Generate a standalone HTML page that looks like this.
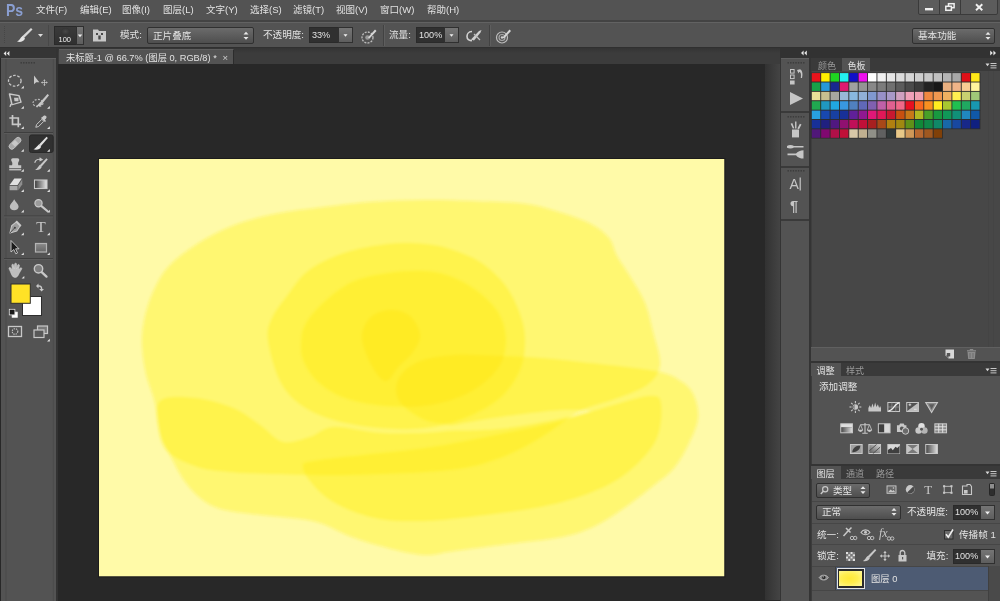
<!DOCTYPE html>
<html lang="zh-CN">
<head>
<meta charset="utf-8">
<title>Photoshop</title>
<style>
*{box-sizing:border-box;margin:0;padding:0}
html,body{width:1000px;height:601px;overflow:hidden;background:#282828}
body{position:relative;font-family:"Liberation Sans","Noto Sans CJK SC",sans-serif;font-size:9.5px;color:#e2e2e2}
.abs{position:absolute}
.t{position:absolute;white-space:nowrap;line-height:12px;height:12px}
#menubar{left:0;top:0;width:1000px;height:22px;background:#535353;border-bottom:2px solid #434343}
#optbar{left:0;top:22px;width:1000px;height:26px;background:#535353;border-top:1px solid #626262;border-bottom:1px solid #303030}
#tabstrip{left:57px;top:48px;width:724px;height:16px;background:linear-gradient(#343434,#3c3c3c 5px)}
#doctab{left:58.5px;top:48.5px;width:175.5px;height:15.5px;background:#535353;border-top:1px solid #5e5e5e;border-right:1.5px solid #2c2c2c}
#toolhead{left:0;top:48px;width:57px;height:10px;background:#353535}
#tools{left:1px;top:58px;width:55px;height:543px;background:#535353;border-top:1px solid #606060}
#toolgap{left:56px;top:48px;width:2px;height:553px;background:#333}
#rscroll{left:765px;top:64px;width:15px;height:536px;background:linear-gradient(to right,#323232,#444)}
#rightbg{left:780px;top:48px;width:220px;height:553px;background:#343434}
.panel{position:absolute;background:#535353}
.ddl{position:absolute;background:linear-gradient(#6b6b6b,#4e4e4e);border:1px solid #303030;border-radius:2px}
.inp{position:absolute;background:#303030;border:1px solid #2a2a2a}
.btn{position:absolute;background:linear-gradient(#757575,#5e5e5e);border:1px solid #303030}
.sep{position:absolute;background:#3f3f3f}
.tabi{position:absolute;color:#9a9a9a}
</style>
</head>
<body>
<div id="root" style="position:absolute;left:0;top:0;width:1000px;height:601px;will-change:transform">
<!-- menu bar -->
<div class="abs" id="menubar"></div>
<div class="t" style="left:6px;top:0;font-size:16.5px;line-height:20px;height:20px;font-weight:bold;color:#8a9fd2;letter-spacing:0;transform:scaleX(0.85);transform-origin:0 0">Ps</div>
<div class="t" style="left:36px;top:4px">文件(F)</div>
<div class="t" style="left:80px;top:4px">编辑(E)</div>
<div class="t" style="left:122px;top:4px">图像(I)</div>
<div class="t" style="left:163px;top:4px">图层(L)</div>
<div class="t" style="left:206px;top:4px">文字(Y)</div>
<div class="t" style="left:250px;top:4px">选择(S)</div>
<div class="t" style="left:293px;top:4px">滤镜(T)</div>
<div class="t" style="left:336px;top:4px">视图(V)</div>
<div class="t" style="left:380px;top:4px">窗口(W)</div>
<div class="t" style="left:427px;top:4px">帮助(H)</div>
<!-- window controls -->
<div class="abs" style="left:918px;top:-1px;width:80px;height:16px;background:#5c5c5c;border:1px solid #3a3a3a;border-radius:0 0 2px 2px"></div>
<div class="abs" style="left:939px;top:0;width:1px;height:14px;background:#3a3a3a"></div>
<div class="abs" style="left:960px;top:0;width:1px;height:14px;background:#3a3a3a"></div>
<svg class="abs" style="left:918px;top:0" width="80" height="15" viewBox="0 0 80 15">
<rect x="7" y="8" width="8" height="2.4" fill="#f0f0f0"/>
<rect x="30.5" y="3.7" width="5.6" height="4" fill="none" stroke="#f0f0f0" stroke-width="1.5"/>
<rect x="27.8" y="6.3" width="5.6" height="4" fill="#5c5c5c" stroke="#f0f0f0" stroke-width="1.5"/>
<path d="M58,4.3 L64.3,10.2 M64.3,4.3 L58,10.2" stroke="#f0f0f0" stroke-width="1.9" fill="none"/>
</svg>
<!-- options bar -->
<div class="abs" id="optbar"></div>
<svg class="abs" style="left:0;top:23px" width="60" height="24" viewBox="0 0 60 24">
<g fill="#464646"><rect x="4" y="3" width="1" height="1"/><rect x="4" y="5" width="1" height="1"/><rect x="4" y="7" width="1" height="1"/><rect x="4" y="9" width="1" height="1"/><rect x="4" y="11" width="1" height="1"/><rect x="4" y="13" width="1" height="1"/><rect x="4" y="15" width="1" height="1"/><rect x="4" y="17" width="1" height="1"/><rect x="4" y="19" width="1" height="1"/></g>
<path d="M31,5 L32.5,6.5 L24,15 L22,13.5 Z" fill="#d8d8d8"/>
<path d="M22.5,13 L25,15.5 C24,18.5 20,19.5 17,18.5 C19.5,17.5 20,15 22.5,13Z" fill="#e4e4e4"/>
<path d="M38,11 L43,11 L40.5,14 Z" fill="#dcdcdc"/>
</svg>
<div class="abs" style="left:47.5px;top:25px;width:1px;height:21px;background:#484848"></div>
<div class="inp" style="left:53.5px;top:26px;width:23px;height:18.5px;background:linear-gradient(#3a3a3a,#303030)"></div>
<div class="abs" style="left:61px;top:28px;width:9px;height:7px;border-radius:50%;background:radial-gradient(#484848,#343434 70%)"></div>
<div class="t" style="left:58.5px;top:34px;font-size:7.5px;color:#f0f0f0">100</div>
<div class="btn" style="left:76px;top:26px;width:7.5px;height:18.5px"></div>
<svg class="abs" style="left:76px;top:26px" width="8" height="19"><path d="M1.8,8.5 L6.2,8.5 L4,11.2Z" fill="#f0f0f0"/></svg>
<svg class="abs" style="left:92px;top:28px" width="15" height="15" viewBox="0 0 15 15">
<path d="M1,3 L1,1.5 L6,1.5 L7,3 L14,3 L14,13.5 L1,13.5Z" fill="#c8c8c8"/>
<rect x="4" y="5" width="2" height="2" fill="#484848"/><rect x="9" y="5" width="2" height="2" fill="#484848"/><rect x="6.3" y="7.5" width="2.4" height="4" fill="#484848"/>
</svg>
<div class="t" style="left:120px;top:29px;font-size:9.6px">模式:</div>
<div class="ddl" style="left:147px;top:27px;width:107px;height:16.5px"></div>
<div class="t" style="left:153px;top:29.5px;font-size:9.6px">正片叠底</div>
<svg class="abs" style="left:242px;top:30px" width="8" height="12"><path d="M1.5,4.5 L4,1.8 L6.5,4.5Z M1.5,7 L4,9.8 L6.5,7Z" fill="#e8e8e8"/></svg>
<div class="t" style="left:263px;top:29px;font-size:9.6px">不透明度:</div>
<div class="inp" style="left:309px;top:27px;width:30px;height:16px"></div>
<div class="t" style="left:312px;top:29px;font-size:9.1px">33%</div>
<div class="btn" style="left:338px;top:27px;width:15px;height:16px"></div>
<svg class="abs" style="left:338px;top:27px" width="15" height="17"><path d="M5.5,7.3 L9.5,7.3 L7.5,9.8Z" fill="#f0f0f0"/></svg>
<svg class="abs" style="left:360px;top:27px" width="18" height="18" viewBox="0 0 18 18">
<circle cx="7.5" cy="10.5" r="5.5" fill="none" stroke="#bdbdbd" stroke-width="1.3" stroke-dasharray="2 1.2"/>
<circle cx="7.500" cy="10.5" r="2.3" fill="#9a9a9a"/>
<path d="M8,10.5 L15,2.5 L16.5,4 L9.5,11.5Z" fill="#d6d6d6"/>
</svg>
<div class="abs" style="left:383px;top:25px;width:1px;height:21px;background:#424242"></div>
<div class="abs" style="left:384px;top:25px;width:1px;height:21px;background:#5e5e5e"></div>
<div class="t" style="left:389px;top:29px;font-size:9.6px">流量:</div>
<div class="inp" style="left:416px;top:27px;width:29px;height:16px"></div>
<div class="t" style="left:419px;top:29px;font-size:9.1px">100%</div>
<div class="btn" style="left:444px;top:27px;width:15px;height:16px"></div>
<svg class="abs" style="left:444px;top:27px" width="15" height="17"><path d="M5.5,7.3 L9.5,7.3 L7.5,9.8Z" fill="#f0f0f0"/></svg>
<svg class="abs" style="left:465px;top:27px" width="20" height="18" viewBox="0 0 20 18">
<path d="M7,4.5 C3,4.5 2,8 2,9.5 C2,12 4,14 7,13.5" fill="none" stroke="#d0d0d0" stroke-width="1.6"/>
<path d="M6,12.5 L14,4 L16.5,3 L15.5,5.5 L9,13.5 Z" fill="#d0d0d0"/>
<path d="M9,7 C11,9 13,11 15,13" stroke="#c0c0c0" stroke-width="1.3" fill="none"/>
</svg>
<div class="abs" style="left:489px;top:25px;width:1px;height:21px;background:#424242"></div>
<div class="abs" style="left:490px;top:25px;width:1px;height:21px;background:#5e5e5e"></div>
<svg class="abs" style="left:495px;top:27px" width="18" height="18" viewBox="0 0 18 18">
<circle cx="7" cy="10.5" r="5.5" fill="none" stroke="#bdbdbd" stroke-width="1.2"/>
<circle cx="7" cy="10.5" r="3" fill="none" stroke="#a8a8a8" stroke-width="1.1"/>
<circle cx="7" cy="10.5" r="1.2" fill="#d0d0d0"/>
<path d="M7.5,10.5 L14.5,2.5 L16,4 L9,11.5Z" fill="#d6d6d6"/>
</svg>
<div class="ddl" style="left:912px;top:28px;width:83px;height:16px"></div>
<div class="t" style="left:918px;top:30px;font-size:9.6px">基本功能</div>
<svg class="abs" style="left:984px;top:30px" width="8" height="12"><path d="M1.5,4.8 L4,2 L6.5,4.8Z M1.5,7 L4,9.8 L6.5,7Z" fill="#e8e8e8"/></svg>

<!-- tab strip -->
<div class="abs" id="tabstrip"></div>
<div class="abs" id="doctab"></div>
<div class="t" style="left:66px;top:51.8px;font-size:9.25px">未标题-1 @ 66.7% (图层 0, RGB/8) *</div>
<div class="t" style="left:222.6px;top:51.8px;font-size:9.5px;color:#cfcfcf">×</div>
<div class="abs" id="rscroll"></div>
<!-- left toolbar -->
<div class="abs" id="toolhead"></div>
<div class="abs" id="toolgap"></div>
<div class="abs" id="tools"></div>
<svg class="abs" style="left:0;top:48px" width="58" height="553" viewBox="0 48 58 553">
<path d="M6.2,51 L6.2,56 L3.6,53.5Z M9.4,51 L9.4,56 L6.8,53.5Z" fill="#e6e6e6"/>
<g fill="#3c3c3c"><rect x="20.5" y="62" width="1.4" height="1.6"/><rect x="23.1" y="62" width="1.4" height="1.6"/><rect x="25.7" y="62" width="1.4" height="1.6"/><rect x="28.3" y="62" width="1.4" height="1.6"/><rect x="30.9" y="62" width="1.4" height="1.6"/><rect x="33.5" y="62" width="1.4" height="1.6"/></g>
<rect x="5.5" y="59" width="1" height="542" fill="#4b4b4b"/><rect x="52.8" y="59" width="1" height="542" fill="#4b4b4b"/>
<rect x="4" y="132" width="49" height="1" fill="#3e3e3e"/><rect x="4" y="133" width="49" height="1" fill="#5a5a5a"/>
<rect x="4" y="215.5" width="49" height="1" fill="#3e3e3e"/><rect x="4" y="216.5" width="49" height="1" fill="#5a5a5a"/>
<rect x="4" y="258" width="49" height="1" fill="#3e3e3e"/><rect x="4" y="259" width="49" height="1" fill="#5a5a5a"/>
<rect x="29.5" y="135" width="23.7" height="17.500" rx="2" fill="#303030" stroke="#292929"/>
<path d="M23.8,88.4 L23.8,85.7 L21.1,88.4Z" fill="#e4e4e4"/>
<path d="M23.8,108.7 L23.8,106.0 L21.1,108.7Z" fill="#e4e4e4"/>
<path d="M49.8,108.7 L49.8,106.0 L47.099999999999994,108.7Z" fill="#e4e4e4"/>
<path d="M23.8,129 L23.8,126.3 L21.1,129Z" fill="#e4e4e4"/>
<path d="M49.8,129 L49.8,126.3 L47.099999999999994,129Z" fill="#e4e4e4"/>
<path d="M23.8,151.8 L23.8,149.10000000000002 L21.1,151.8Z" fill="#e4e4e4"/>
<path d="M49.8,151.8 L49.8,149.10000000000002 L47.099999999999994,151.8Z" fill="#e4e4e4"/>
<path d="M23.8,171.8 L23.8,169.10000000000002 L21.1,171.8Z" fill="#e4e4e4"/>
<path d="M49.8,171.8 L49.8,169.10000000000002 L47.099999999999994,171.8Z" fill="#e4e4e4"/>
<path d="M23.8,192 L23.8,189.3 L21.1,192Z" fill="#e4e4e4"/>
<path d="M49.8,192 L49.8,189.3 L47.099999999999994,192Z" fill="#e4e4e4"/>
<path d="M23.8,212.4 L23.8,209.70000000000002 L21.1,212.4Z" fill="#e4e4e4"/>
<path d="M49.8,212.4 L49.8,209.70000000000002 L47.099999999999994,212.4Z" fill="#e4e4e4"/>
<path d="M23.8,235.2 L23.8,232.5 L21.1,235.2Z" fill="#e4e4e4"/>
<path d="M49.8,235.2 L49.8,232.5 L47.099999999999994,235.2Z" fill="#e4e4e4"/>
<path d="M23.8,255.1 L23.8,252.4 L21.1,255.1Z" fill="#e4e4e4"/>
<path d="M49.8,255.1 L49.8,252.4 L47.099999999999994,255.1Z" fill="#e4e4e4"/>
<path d="M24.3,278.6 L24.3,275.90000000000003 L21.6,278.6Z" fill="#e4e4e4"/>
<ellipse cx="14.8" cy="80.8" rx="6.3" ry="5.400" fill="none" stroke="#c8c8c8" stroke-width="1.3" stroke-dasharray="2.6 1.6"/>
<path d="M34,75.5 L34,84.2 L36.2,82.2 L39.300,82.2 Z" fill="#c8c8c8"/>
<g transform="translate(44.4,82.6) scale(0.62) translate(-44,-83)"><path d="M44,77.5 L46,80 L44.6,80 L44.6,82.4 L47,82.4 L47,81 L49.5,83 L47,85 L47,83.6 L44.6,83.6 L44.6,86 L46,86 L44,88.5 L42,86 L43.4,86 L43.4,83.6 L41,83.6 L41,85 L38.5,83 L41,81 L41,82.4 L43.4,82.4 L43.4,80 L42,80Z" fill="#c8c8c8"/></g>
<g transform="translate(0,94) scale(1,0.86) translate(0,-93.5)"><path d="M9.5,93.5 L19,95.5 L21,103 L12,106 Z" fill="none" stroke="#c8c8c8" stroke-width="1.5" stroke-linejoin="round"/>
<path d="M14,98 L18.5,98 L18.5,102 L14.5,102Z" fill="#c8c8c8"/><path d="M11,105 L10,108.500" stroke="#c8c8c8" stroke-width="1.4"/></g>
<ellipse cx="38" cy="103" rx="5" ry="3.6" fill="none" stroke="#b8b8b8" stroke-width="1.2" stroke-dasharray="2 1.3"/>
<path d="M40,102.5 L47.5,94 L49,95.3 L42,104Z" fill="#c8c8c8"/><path d="M40.5,102 L42.5,104 C41,106.5 38,106.5 36,106 C38,105 38.5,103.5 40.5,102Z" fill="#c8c8c8"/>
<path d="M12.5,115 L12.5,124.3 L21,124.3 M9.300,118 L18.300,118 L18.300,127.300" fill="none" stroke="#c8c8c8" stroke-width="1.7"/>
<g transform="translate(41,121.3) scale(0.8) translate(-41.5,-122)"><path d="M35,129.5 L36,126 L42.5,119.5 L45,122 L38.5,128.5Z" fill="none" stroke="#c8c8c8" stroke-width="1.2"/>
<path d="M41.5,118 L46.5,123 L47.8,121.7 L46.3,120.2 C48.5,118.5 49,116.5 47.8,115.3 C46.5,114 44.5,114.5 43,116.8 L42.8,116.7Z" fill="#c8c8c8"/></g>
<g transform="translate(15,143.3) scale(0.8) translate(-15,-143.5) rotate(-45 15 143.5)"><rect x="6" y="140" width="18" height="7" rx="3.5" fill="#a8a8a8" stroke="#c8c8c8" stroke-width="1"/><rect x="12" y="140.5" width="6" height="6" fill="#c8c8c8"/></g>
<g transform="translate(40.7,143.5) scale(0.9) translate(-43,-143.5)"><path d="M49.5,136 L51,137.4 L43,146.5 L41,145Z" fill="#e0e0e0"/><path d="M41,144.5 L43.5,147 C42.5,150 38.5,151 35,150 C37.5,149 38.5,146.5 41,144.5Z" fill="#e8e8e8"/></g>
<g transform="translate(0,164.3) scale(0.96,0.8) translate(0.6,-163.2)"><path d="M13,155.5 C11,155.5 10.5,157.5 11.5,159.5 C12.3,161 12.5,162.5 12,164.5 L9,164.5 L9,168 L21.5,168 L21.5,164.5 L18.5,164.5 C18,162.5 18.2,161 19,159.5 C20,157.5 19.5,155.5 17.5,155.5Z" fill="#c8c8c8"/><rect x="9" y="169.2" width="12.5" height="1.6" fill="#c8c8c8"/></g>
<g transform="translate(41,163.800) scale(0.9) translate(-42.5,-162.7)"><path d="M48.5,156.5 L50,158 L43,166 L41,164.5Z" fill="#c8c8c8"/><path d="M41,164 L43.3,166.3 C42.3,169 39,170 36,169.3 C38.3,168.3 39,166 41,164Z" fill="#c8c8c8"/>
<path d="M35.5,161.5 C36.5,158.5 39.5,157 42.5,158" fill="none" stroke="#c8c8c8" stroke-width="1.4"/><path d="M41,155.5 L45,158.3 L40.8,160.2Z" fill="#c8c8c8"/></g>
<g transform="translate(-0.3,0.6) translate(16,184) scale(0.94) translate(-16,-184)"><path d="M14.5,177.5 L22.5,177.5 L18,184.5 L9.5,184.5Z" fill="#e0e0e0"/><path d="M9.5,185.3 L18,185.3 L18,190 L9.5,190Z" fill="#a8a8a8"/><path d="M18.8,185 L23,178.5 L23,183.5 L18.8,190Z" fill="#8e8e8e"/></g>
<defs><linearGradient id="gg" x1="0" x2="1"><stop offset="0" stop-color="#3a3a3a"/><stop offset="1" stop-color="#e8e8e8"/></linearGradient><linearGradient id="gv" x1="0" x2="0" y1="0" y2="1"><stop offset="0" stop-color="#8a8a8a"/><stop offset="1" stop-color="#666"/></linearGradient></defs>
<rect x="34.5" y="180" width="12.5" height="8.500" fill="url(#gg)" stroke="#c8c8c8" stroke-width="1.1"/>
<path d="M14.2,199.2 C15.4,201.8 18.6,204 18.6,206.600 C18.6,209 16.8,210.2 14.2,210.2 C11.600,210.2 9.800,209 9.800,206.600 C9.800,204 13,201.800 14.2,199.200Z" fill="#bdbdbd"/>
<circle cx="38.5" cy="203.3" r="3.600" fill="#9a9a9a" stroke="#c8c8c8" stroke-width="1.2"/><path d="M41.5,206.2 L47.3,211" stroke="#c8c8c8" stroke-width="2.2" stroke-linecap="round"/>
<g transform="translate(15.5,226.800) scale(0.86) translate(-16,-228.200)"><path d="M9.5,235.5 L11.5,227 L17,222.5 L21.5,227 L17.5,233Z" fill="#9c9c9c" stroke="#c8c8c8" stroke-width="1.2" stroke-linejoin="round"/><path d="M9.5,235.5 L15,229.5" stroke="#444" stroke-width="1"/><circle cx="15.3" cy="229.2" r="1.2" fill="#444"/><path d="M17.5,221 L23,226.5 L21.5,228 L16,222.5Z" fill="#c8c8c8"/></g>
<text x="41" y="232.3" font-family="Liberation Serif,serif" font-size="15.5" text-anchor="middle" fill="#c8c8c8">T</text>
<path d="M11,240.5 L11,252 L13.800,249.500 L15.800,253.800 L17.500,253 L15.600,248.800 L19,248.800Z" fill="#1a1a1a" stroke="#cfcfcf" stroke-width="0.9"/>
<rect x="35.5" y="243.5" width="11" height="8.5" fill="url(#gv)" stroke="#b4b4b4" stroke-width="1.2"/>
<g transform="translate(0,1.5)"><path d="M10.5,270.5 L9,267.3 C8.6,266 10.2,265.3 10.9,266.5 L12.3,268.8 L11.8,263.8 C11.7,262.5 13.5,262.3 13.7,263.6 L14.3,267.3 L14.6,262.6 C14.7,261.3 16.6,261.4 16.6,262.7 L16.5,267.4 L17.6,263.7 C18,262.5 19.7,263 19.4,264.2 L18.5,268.5 L20.2,266.6 C21.1,265.7 22.3,266.7 21.6,267.7 L18.8,272.5 C18,274.5 17,276 15,276 C12.5,276 11.5,273 10.5,270.5Z" fill="#bdbdbd" stroke="#d6d6d6" stroke-width="0.5"/></g>
<circle cx="38.5" cy="268.8" r="4.2" fill="#7e7e7e" stroke="#c8c8c8" stroke-width="1.4"/><path d="M41.7,272.2 L46.5,276.6" stroke="#c8c8c8" stroke-width="2.3" stroke-linecap="round"/>
<rect x="22.5" y="296.5" width="19" height="19" fill="#ffffff" stroke="#2e2e2e" stroke-width="1"/>
<rect x="11" y="284" width="19.3" height="19.3" fill="#ffe226" stroke="#2e2e2e" stroke-width="1"/>
<path d="M36,286 L38.5,283.5 L38.5,285.3 C41.5,285.3 42.3,286.5 42.3,289 L44,289 L41.6,291.6 L39.2,289 L40.9,289 C40.9,287.2 40.3,286.8 38.5,286.8 L38.5,288.5Z" fill="#c8c8c8"/>
<rect x="12" y="312" width="5.6" height="5.6" fill="#fff" stroke="#ddd" stroke-width="0.6"/><rect x="9.3" y="309.3" width="5.6" height="5.6" fill="#1a1a1a" stroke="#ddd" stroke-width="0.8"/>
<rect x="8.5" y="326.5" width="13" height="10" fill="none" stroke="#c8c8c8" stroke-width="1.3"/><circle cx="15" cy="331.5" r="2.8" fill="none" stroke="#c8c8c8" stroke-width="1.1" stroke-dasharray="1.4 0.9"/>
<rect x="37.5" y="326" width="10" height="7.5" fill="#7a7a7a" stroke="#c8c8c8" stroke-width="1.2"/><rect x="34" y="330" width="10" height="7.5" fill="#585858" stroke="#c8c8c8" stroke-width="1.2"/>
<path d="M49.8,341.5 L49.8,338.8 L47.099999999999994,341.5Z" fill="#e4e4e4"/>
</svg>
<!-- canvas -->
<svg class="abs" id="paint" style="left:0;top:0" width="1000" height="601" viewBox="0 0 1000 601"><defs><filter id="bl" x="-5%" y="-5%" width="110%" height="110%"><feGaussianBlur stdDeviation="1.8"/></filter><clipPath id="cv"><rect x="99" y="159" width="625.5" height="417.5"/></clipPath></defs><g clip-path="url(#cv)"><rect x="99" y="159" width="626" height="418" fill="#fffaa8"/><g filter="url(#bl)">
<path d="M142.0,345.0C141.7,336.2 142.2,329.8 144.0,321.0C145.8,312.2 148.5,301.5 153.0,292.0C157.5,282.5 162.0,273.0 171.0,264.0C180.0,255.0 195.0,245.0 207.0,238.0C219.0,231.0 230.8,226.2 243.0,222.0C255.2,217.8 267.8,215.3 280.0,213.0C292.2,210.7 301.0,209.8 316.0,208.0C331.0,206.2 352.0,203.3 370.0,202.0C388.0,200.7 407.0,200.2 424.0,200.0C441.0,199.8 455.0,200.3 472.0,201.0C489.0,201.7 511.0,202.0 526.0,204.0C541.0,206.0 551.2,209.7 562.0,213.0C572.8,216.3 583.2,219.8 591.0,224.0C598.8,228.2 604.7,232.7 609.0,238.0C613.3,243.3 613.3,249.3 617.0,256.0C620.7,262.7 626.3,270.2 631.0,278.0C635.7,285.8 641.3,294.0 645.0,303.0C648.7,312.0 650.5,321.7 653.0,332.0C655.5,342.3 661.0,356.2 660.0,365.0C659.0,373.8 654.5,379.3 647.0,385.0C639.5,390.7 626.2,394.7 615.0,399.0C603.8,403.3 592.5,404.5 580.0,411.0C567.5,417.5 553.3,430.2 540.0,438.0C526.7,445.8 515.0,452.7 500.0,458.0C485.0,463.3 475.0,467.2 450.0,470.0C425.0,472.8 379.7,474.3 350.0,475.0C320.3,475.7 292.0,474.5 272.0,474.0C252.0,473.5 242.8,473.3 230.0,472.0C217.2,470.7 206.0,470.2 195.0,466.0C184.0,461.8 170.7,457.5 164.0,447.0C157.3,436.5 158.0,415.2 155.0,403.0C152.0,390.8 148.2,383.7 146.0,374.0C143.8,364.3 142.3,353.8 142.0,345.0Z" fill="rgb(255,242,28)" fill-opacity="0.385" style="mix-blend-mode:multiply"/>
<path d="M160.0,401.0C165.8,395.3 182.8,396.8 195.0,398.0C207.2,399.2 222.2,403.5 233.0,408.0C243.8,412.5 251.7,419.3 260.0,425.0C268.3,430.7 274.7,440.0 283.0,442.0C291.3,444.0 301.5,439.5 310.0,437.0C318.5,434.5 322.3,427.7 334.0,427.0C345.7,426.3 364.8,432.0 380.0,433.0C395.2,434.0 413.8,433.3 425.0,433.0C436.2,432.7 443.3,431.3 447.0,431.0C450.7,430.7 447.0,431.0 447.0,431.0C447.0,431.0 438.2,431.3 447.0,431.0C455.8,430.7 481.2,431.0 500.0,429.0C518.8,427.0 544.7,422.0 560.0,419.0C575.3,416.0 586.7,412.3 592.0,411.0C597.3,409.7 592.0,411.0 592.0,411.0C592.0,411.0 597.3,411.2 592.0,411.0C586.7,410.8 575.3,409.0 560.0,410.0C544.7,411.0 518.0,414.5 500.0,417.0C482.0,419.5 460.0,423.7 452.0,425.0C444.0,426.3 452.0,425.0 452.0,425.0C452.0,425.0 456.5,425.8 452.0,425.0C447.5,424.2 433.7,423.8 425.0,420.0C416.3,416.2 404.5,408.7 400.0,402.0C395.5,395.3 395.0,386.7 398.0,380.0C401.0,373.3 408.5,366.2 418.0,362.0C427.5,357.8 441.3,356.0 455.0,355.0C468.7,354.0 485.8,355.5 500.0,356.0C514.2,356.5 526.7,357.0 540.0,358.0C553.3,359.0 560.8,359.8 580.0,362.0C599.2,364.2 638.0,367.7 655.0,371.0C672.0,374.3 675.5,377.8 682.0,382.0C688.5,386.2 691.3,390.0 694.0,396.0C696.7,402.0 698.8,410.2 698.0,418.0C697.2,425.8 693.0,434.7 689.0,443.0C685.0,451.3 680.0,460.8 674.0,468.0C668.0,475.2 661.3,479.3 653.0,486.0C644.7,492.7 633.7,501.3 624.0,508.0C614.3,514.7 605.3,521.2 595.0,526.0C584.7,530.8 576.5,534.0 562.0,537.0C547.5,540.0 526.0,541.7 508.0,544.0C490.0,546.3 468.0,549.2 454.0,551.0C440.0,552.8 435.0,555.5 424.0,555.0C413.0,554.5 400.0,551.0 388.0,548.0C376.0,545.0 362.8,541.0 352.0,537.0C341.2,533.0 331.5,527.0 323.0,524.0C314.5,521.0 311.3,520.5 301.0,519.0C290.7,517.5 273.7,516.5 261.0,515.0C248.3,513.5 234.5,512.3 225.0,510.0C215.5,507.7 210.5,505.5 204.0,501.0C197.5,496.5 191.5,490.3 186.0,483.0C180.5,475.7 175.3,465.5 171.0,457.0C166.7,448.5 161.8,441.3 160.0,432.0C158.2,422.7 154.2,406.7 160.0,401.0Z" fill="rgb(255,242,28)" fill-opacity="0.385" style="mix-blend-mode:multiply"/>
<path d="M303.0,468.0C303.0,462.7 299.7,463.3 320.0,460.0C340.3,456.7 395.0,452.3 425.0,448.0C455.0,443.7 477.5,438.5 500.0,434.0C522.5,429.5 541.7,425.7 560.0,421.0C578.3,416.3 595.0,410.2 610.0,406.0C625.0,401.8 641.5,396.3 650.0,396.0C658.5,395.7 660.0,396.7 661.0,404.0C662.0,411.3 661.5,428.7 656.0,440.0C650.5,451.3 638.7,463.3 628.0,472.0C617.3,480.7 606.7,486.2 592.0,492.0C577.3,497.8 562.0,502.7 540.0,507.0C518.0,511.3 480.0,515.7 460.0,518.0C440.0,520.3 433.3,520.8 420.0,521.0C406.7,521.2 392.5,521.2 380.0,519.0C367.5,516.8 355.0,512.5 345.0,508.0C335.0,503.5 327.0,498.7 320.0,492.0C313.0,485.3 303.0,473.3 303.0,468.0Z" fill="rgb(255,242,28)" fill-opacity="0.385" style="mix-blend-mode:multiply"/>
<path d="M268.0,340.0C266.7,329.5 268.8,325.3 272.0,318.0C275.2,310.7 281.0,303.8 287.0,296.0C293.0,288.2 298.5,278.2 308.0,271.0C317.5,263.8 330.7,257.5 344.0,253.0C357.3,248.5 374.7,245.5 388.0,244.0C401.3,242.5 413.7,243.2 424.0,244.0C434.3,244.8 440.7,246.0 450.0,249.0C459.3,252.0 470.8,256.0 480.0,262.0C489.2,268.0 498.3,276.3 505.0,285.0C511.7,293.7 516.7,304.8 520.0,314.0C523.3,323.2 525.0,330.7 525.0,340.0C525.0,349.3 524.2,360.3 520.0,370.0C515.8,379.7 509.2,390.0 500.0,398.0C490.8,406.0 477.5,413.0 465.0,418.0C452.5,423.0 439.2,426.3 425.0,428.0C410.8,429.7 395.2,429.3 380.0,428.0C364.8,426.7 347.2,423.8 334.0,420.0C320.8,416.2 310.0,411.5 301.0,405.0C292.0,398.5 285.5,391.8 280.0,381.0C274.5,370.2 269.3,350.5 268.0,340.0Z" fill="rgb(255,242,28)" fill-opacity="0.385" style="mix-blend-mode:multiply"/>
<path d="M301.0,345.0C301.2,338.8 301.3,332.0 305.0,325.0C308.7,318.0 315.2,310.2 323.0,303.0C330.8,295.8 341.2,287.0 352.0,282.0C362.8,277.0 376.0,274.8 388.0,273.0C400.0,271.2 413.7,270.5 424.0,271.0C434.3,271.5 441.3,272.8 450.0,276.0C458.7,279.2 468.0,284.0 476.0,290.0C484.0,296.0 493.0,303.7 498.0,312.0C503.0,320.3 506.0,330.7 506.0,340.0C506.0,349.3 504.0,359.3 498.0,368.0C492.0,376.7 481.3,385.8 470.0,392.0C458.7,398.2 444.2,402.7 430.0,405.0C415.8,407.3 399.2,407.2 385.0,406.0C370.8,404.8 356.2,402.0 345.0,398.0C333.8,394.0 324.8,388.0 318.0,382.0C311.2,376.0 306.8,368.2 304.0,362.0C301.2,355.8 300.8,351.2 301.0,345.0Z" fill="rgb(255,242,28)" fill-opacity="0.385" style="mix-blend-mode:multiply"/>
<path d="M362.0,338.0C361.7,330.0 365.3,322.7 370.0,318.0C374.7,313.3 383.3,310.3 390.0,310.0C396.7,309.7 405.0,311.8 410.0,316.0C415.0,320.2 419.5,329.0 420.0,335.0C420.5,341.0 416.5,346.8 413.0,352.0C409.5,357.2 403.5,361.2 399.0,366.0C394.5,370.8 390.5,381.0 386.0,381.0C381.5,381.0 376.0,373.2 372.0,366.0C368.0,358.8 362.3,346.0 362.0,338.0Z" fill="rgb(255,242,28)" fill-opacity="0.385" style="mix-blend-mode:multiply"/>
</g></g><rect x="98.5" y="158.5" width="626.5" height="418.5" fill="none" stroke="#1c1c1c" stroke-width="1"/></svg>
<!-- right dock -->
<div class="abs" id="rightbg"></div>
<div class="abs" style="left:780px;top:48px;width:220px;height:10px;background:#323232"></div>
<div class="abs" style="left:781px;top:58px;width:28.3px;height:543px;background:#535353;border-top:1px solid #606060"></div>
<div class="abs" style="left:781px;top:111px;width:28.3px;height:2px;background:#3a3a3a"></div>
<div class="abs" style="left:781px;top:165.5px;width:28.3px;height:2px;background:#3a3a3a"></div>
<div class="abs" style="left:781px;top:219px;width:28.3px;height:2px;background:#3a3a3a"></div>
<svg class="abs" style="left:780px;top:48px" width="220" height="180" viewBox="780 48 220 180">
<path d="M803.6,50.6 L803.6,55.6 L801,53.1Z M806.8,50.6 L806.8,55.6 L804.2,53.1Z" fill="#e6e6e6"/>
<path d="M990.2,50.6 L990.2,55.6 L992.8,53.1Z M993.4,50.6 L993.4,55.6 L996,53.1Z" fill="#e6e6e6"/>
<g fill="#3c3c3c"><rect x="787.5" y="62" width="1.4" height="1.6"/><rect x="790.1" y="62" width="1.4" height="1.6"/><rect x="792.7" y="62" width="1.4" height="1.6"/><rect x="795.3" y="62" width="1.4" height="1.6"/><rect x="797.9" y="62" width="1.4" height="1.6"/><rect x="800.5" y="62" width="1.4" height="1.6"/><rect x="803.1" y="62" width="1.4" height="1.6"/></g>
<g fill="#3c3c3c"><rect x="787.5" y="116" width="1.4" height="1.6"/><rect x="790.1" y="116" width="1.4" height="1.6"/><rect x="792.7" y="116" width="1.4" height="1.6"/><rect x="795.3" y="116" width="1.4" height="1.6"/><rect x="797.9" y="116" width="1.4" height="1.6"/><rect x="800.5" y="116" width="1.4" height="1.6"/><rect x="803.1" y="116" width="1.4" height="1.6"/></g>
<g fill="#3c3c3c"><rect x="787.5" y="170" width="1.4" height="1.6"/><rect x="790.1" y="170" width="1.4" height="1.6"/><rect x="792.7" y="170" width="1.4" height="1.6"/><rect x="795.3" y="170" width="1.4" height="1.6"/><rect x="797.9" y="170" width="1.4" height="1.6"/><rect x="800.5" y="170" width="1.4" height="1.6"/><rect x="803.1" y="170" width="1.4" height="1.6"/></g>
<g transform="translate(0,-1)"><g fill="none" stroke="#c6c6c6" stroke-width="1"><rect x="790.5" y="70.5" width="3.6" height="3.6"/><rect x="790.5" y="76" width="3.6" height="3.600"/></g><rect x="790" y="81.5" width="4.6" height="4" fill="#c6c6c6"/>
<path d="M797,71 L800,70.2 C802.5,71.5 803,75 802,79 L800.8,79 C801.3,75.5 801,73.5 799.3,72.8 L798.5,74.5Z" fill="#c6c6c6"/>
<path d="M790,93 L790,106 L803,99.5Z" fill="#c6c6c6"/>
<g transform="translate(0,-4.5) translate(795.5,135) scale(0.88) translate(-795.5,-135)"><path d="M791.5,135 L799.5,135 L799.5,144 L791.5,144Z" fill="#c6c6c6"/><path d="M792.5,134 L790,128.5 L791.8,127.6 L794.2,133.6Z M795,134 L795,126 L796.6,126 L796.6,134Z M797.6,134 L800.5,128.5 L802.3,129.4 L799.5,134.8Z" fill="#c6c6c6"/></g>
<g transform="translate(0,-1.5) translate(795,148) scale(1,0.9) translate(-795,-148)"><path d="M787,148.5 C789,147 792,147.2 794,148.5 L803.5,148.5 L803.5,150.3 L794,150.3 C792,151.7 789,151.8 787,150.5Z" fill="#c6c6c6"/><path d="M787.5,157 L796,157 C797.5,154.8 800.5,153.3 803.5,153.3 L803.5,162.5 C800.5,162.5 797.5,161 796,158.7 L787.5,158.7Z" fill="#c6c6c6"/></g>
<text x="789.5" y="190.3" font-family="Liberation Sans,sans-serif" font-size="14" fill="#c6c6c6">A</text><rect x="799.6" y="178.5" width="1.2" height="13" fill="#c6c6c6"/>
<text x="790" y="211.5" font-family="Liberation Sans,sans-serif" font-size="14.5" font-weight="bold" fill="#c6c6c6">¶</text>
</svg>
<div class="abs" style="left:811px;top:58px;width:189px;height:13px;background:#3a3a3a"></div>
<div class="abs" style="left:842px;top:58px;width:28px;height:14px;background:#535353"></div>
<div class="abs" style="left:811px;top:71px;width:189px;height:276px;background:#474747;border-left:1px solid #3e3e3e"></div>
<div class="abs" style="left:811px;top:347px;width:189px;height:14px;background:#535353;border-top:1px solid #606060"></div>
<div class="t tabi" style="left:818px;top:60px;font-size:9px">颜色</div>
<div class="t" style="left:847.5px;top:60px;font-size:9px">色板</div>
<svg class="abs" style="left:0;top:0" width="1000" height="150" viewBox="0 0 1000 150" shape-rendering="auto"><rect x="811.30" y="72.60" width="169.06" height="9.77" fill="#2c2c2c"/><rect x="811.80" y="73.10" width="8.47" height="8.47" fill="#e8141c"/><rect x="821.17" y="73.10" width="8.47" height="8.47" fill="#ffee00"/><rect x="830.54" y="73.10" width="8.47" height="8.47" fill="#1fd321"/><rect x="839.91" y="73.10" width="8.47" height="8.47" fill="#23f0f0"/><rect x="849.28" y="73.10" width="8.47" height="8.47" fill="#1010c8"/><rect x="858.65" y="73.10" width="8.47" height="8.47" fill="#ee10ee"/><rect x="868.02" y="73.10" width="8.47" height="8.47" fill="#ffffff"/><rect x="877.39" y="73.10" width="8.47" height="8.47" fill="#f0f0f0"/><rect x="886.76" y="73.10" width="8.47" height="8.47" fill="#e6e6e6"/><rect x="896.13" y="73.10" width="8.47" height="8.47" fill="#dcdcdc"/><rect x="905.50" y="73.10" width="8.47" height="8.47" fill="#d6d6d6"/><rect x="914.87" y="73.10" width="8.47" height="8.47" fill="#cecece"/><rect x="924.24" y="73.10" width="8.47" height="8.47" fill="#c8c8c8"/><rect x="933.61" y="73.10" width="8.47" height="8.47" fill="#c0c0c0"/><rect x="942.98" y="73.10" width="8.47" height="8.47" fill="#b4b4b4"/><rect x="952.35" y="73.10" width="8.47" height="8.47" fill="#a8a8a8"/><rect x="961.72" y="73.10" width="8.47" height="8.47" fill="#e01018"/><rect x="971.09" y="73.10" width="8.47" height="8.47" fill="#ffe818"/><rect x="811.30" y="81.97" width="169.06" height="9.77" fill="#2c2c2c"/><rect x="811.80" y="82.47" width="8.47" height="8.47" fill="#18a048"/><rect x="821.17" y="82.47" width="8.47" height="8.47" fill="#2898d8"/><rect x="830.54" y="82.47" width="8.47" height="8.47" fill="#182890"/><rect x="839.91" y="82.47" width="8.47" height="8.47" fill="#e01870"/><rect x="849.28" y="82.47" width="8.47" height="8.47" fill="#a0a0a0"/><rect x="858.65" y="82.47" width="8.47" height="8.47" fill="#949494"/><rect x="868.02" y="82.47" width="8.47" height="8.47" fill="#888888"/><rect x="877.39" y="82.47" width="8.47" height="8.47" fill="#7c7c7c"/><rect x="886.76" y="82.47" width="8.47" height="8.47" fill="#707070"/><rect x="896.13" y="82.47" width="8.47" height="8.47" fill="#5c5c5c"/><rect x="905.50" y="82.47" width="8.47" height="8.47" fill="#4a4a4a"/><rect x="914.87" y="82.47" width="8.47" height="8.47" fill="#3a3a3a"/><rect x="924.24" y="82.47" width="8.47" height="8.47" fill="#222222"/><rect x="933.61" y="82.47" width="8.47" height="8.47" fill="#181818"/><rect x="942.98" y="82.47" width="8.47" height="8.47" fill="#eab080"/><rect x="952.35" y="82.47" width="8.47" height="8.47" fill="#f0b488"/><rect x="961.72" y="82.47" width="8.47" height="8.47" fill="#f8cc94"/><rect x="971.09" y="82.47" width="8.47" height="8.47" fill="#fff49c"/><rect x="811.30" y="91.34" width="169.06" height="9.77" fill="#2c2c2c"/><rect x="811.80" y="91.84" width="8.47" height="8.47" fill="#e8e098"/><rect x="821.17" y="91.84" width="8.47" height="8.47" fill="#c8c090"/><rect x="830.54" y="91.84" width="8.47" height="8.47" fill="#a8a8a0"/><rect x="839.91" y="91.84" width="8.47" height="8.47" fill="#98b8d8"/><rect x="849.28" y="91.84" width="8.47" height="8.47" fill="#88b8e0"/><rect x="858.65" y="91.84" width="8.47" height="8.47" fill="#90b0d8"/><rect x="868.02" y="91.84" width="8.47" height="8.47" fill="#8098d0"/><rect x="877.39" y="91.84" width="8.47" height="8.47" fill="#9890c8"/><rect x="886.76" y="91.84" width="8.47" height="8.47" fill="#a898c8"/><rect x="896.13" y="91.84" width="8.47" height="8.47" fill="#d0a0c0"/><rect x="905.50" y="91.84" width="8.47" height="8.47" fill="#f0a0b8"/><rect x="914.87" y="91.84" width="8.47" height="8.47" fill="#f0a0b0"/><rect x="924.24" y="91.84" width="8.47" height="8.47" fill="#f08840"/><rect x="933.61" y="91.84" width="8.47" height="8.47" fill="#f09850"/><rect x="942.98" y="91.84" width="8.47" height="8.47" fill="#f0b060"/><rect x="952.35" y="91.84" width="8.47" height="8.47" fill="#fff050"/><rect x="961.72" y="91.84" width="8.47" height="8.47" fill="#c8d070"/><rect x="971.09" y="91.84" width="8.47" height="8.47" fill="#a0c878"/><rect x="811.30" y="100.71" width="169.06" height="9.77" fill="#2c2c2c"/><rect x="811.80" y="101.21" width="8.47" height="8.47" fill="#20a850"/><rect x="821.17" y="101.21" width="8.47" height="8.47" fill="#2098c0"/><rect x="830.54" y="101.21" width="8.47" height="8.47" fill="#20a8e0"/><rect x="839.91" y="101.21" width="8.47" height="8.47" fill="#3898e0"/><rect x="849.28" y="101.21" width="8.47" height="8.47" fill="#5080c0"/><rect x="858.65" y="101.21" width="8.47" height="8.47" fill="#6068b8"/><rect x="868.02" y="101.21" width="8.47" height="8.47" fill="#8060b0"/><rect x="877.39" y="101.21" width="8.47" height="8.47" fill="#c060a8"/><rect x="886.76" y="101.21" width="8.47" height="8.47" fill="#e06090"/><rect x="896.13" y="101.21" width="8.47" height="8.47" fill="#f06888"/><rect x="905.50" y="101.21" width="8.47" height="8.47" fill="#e81020"/><rect x="914.87" y="101.21" width="8.47" height="8.47" fill="#f86820"/><rect x="924.24" y="101.21" width="8.47" height="8.47" fill="#f89020"/><rect x="933.61" y="101.21" width="8.47" height="8.47" fill="#ffec20"/><rect x="942.98" y="101.21" width="8.47" height="8.47" fill="#a8c830"/><rect x="952.35" y="101.21" width="8.47" height="8.47" fill="#20c050"/><rect x="961.72" y="101.21" width="8.47" height="8.47" fill="#20a860"/><rect x="971.09" y="101.21" width="8.47" height="8.47" fill="#1898b0"/><rect x="811.30" y="110.08" width="169.06" height="9.77" fill="#2c2c2c"/><rect x="811.80" y="110.58" width="8.47" height="8.47" fill="#28a0e0"/><rect x="821.17" y="110.58" width="8.47" height="8.47" fill="#1848b0"/><rect x="830.54" y="110.58" width="8.47" height="8.47" fill="#1840a0"/><rect x="839.91" y="110.58" width="8.47" height="8.47" fill="#183098"/><rect x="849.28" y="110.58" width="8.47" height="8.47" fill="#602098"/><rect x="858.65" y="110.58" width="8.47" height="8.47" fill="#901890"/><rect x="868.02" y="110.58" width="8.47" height="8.47" fill="#e01878"/><rect x="877.39" y="110.58" width="8.47" height="8.47" fill="#e01858"/><rect x="886.76" y="110.58" width="8.47" height="8.47" fill="#c81830"/><rect x="896.13" y="110.58" width="8.47" height="8.47" fill="#c85010"/><rect x="905.50" y="110.58" width="8.47" height="8.47" fill="#c87818"/><rect x="914.87" y="110.58" width="8.47" height="8.47" fill="#b0b820"/><rect x="924.24" y="110.58" width="8.47" height="8.47" fill="#48a028"/><rect x="933.61" y="110.58" width="8.47" height="8.47" fill="#189840"/><rect x="942.98" y="110.58" width="8.47" height="8.47" fill="#109858"/><rect x="952.35" y="110.58" width="8.47" height="8.47" fill="#109078"/><rect x="961.72" y="110.58" width="8.47" height="8.47" fill="#2088c0"/><rect x="971.09" y="110.58" width="8.47" height="8.47" fill="#1058a8"/><rect x="811.30" y="119.45" width="169.06" height="9.77" fill="#2c2c2c"/><rect x="811.80" y="119.95" width="8.47" height="8.47" fill="#183098"/><rect x="821.17" y="119.95" width="8.47" height="8.47" fill="#202080"/><rect x="830.54" y="119.95" width="8.47" height="8.47" fill="#501880"/><rect x="839.91" y="119.95" width="8.47" height="8.47" fill="#901070"/><rect x="849.28" y="119.95" width="8.47" height="8.47" fill="#c01058"/><rect x="858.65" y="119.95" width="8.47" height="8.47" fill="#c01038"/><rect x="868.02" y="119.95" width="8.47" height="8.47" fill="#a82020"/><rect x="877.39" y="119.95" width="8.47" height="8.47" fill="#a84818"/><rect x="886.76" y="119.95" width="8.47" height="8.47" fill="#b08010"/><rect x="896.13" y="119.95" width="8.47" height="8.47" fill="#a08810"/><rect x="905.50" y="119.95" width="8.47" height="8.47" fill="#609018"/><rect x="914.87" y="119.95" width="8.47" height="8.47" fill="#108838"/><rect x="924.24" y="119.95" width="8.47" height="8.47" fill="#108848"/><rect x="933.61" y="119.95" width="8.47" height="8.47" fill="#108868"/><rect x="942.98" y="119.95" width="8.47" height="8.47" fill="#1868a8"/><rect x="952.35" y="119.95" width="8.47" height="8.47" fill="#1848a0"/><rect x="961.72" y="119.95" width="8.47" height="8.47" fill="#182888"/><rect x="971.09" y="119.95" width="8.47" height="8.47" fill="#102080"/><rect x="811.30" y="128.82" width="131.58" height="9.77" fill="#2c2c2c"/><rect x="811.80" y="129.32" width="8.47" height="8.47" fill="#501878"/><rect x="821.17" y="129.32" width="8.47" height="8.47" fill="#800870"/><rect x="830.54" y="129.32" width="8.47" height="8.47" fill="#b01048"/><rect x="839.91" y="129.32" width="8.47" height="8.47" fill="#c01038"/><rect x="849.28" y="129.32" width="8.47" height="8.47" fill="#d8c8a8"/><rect x="858.65" y="129.32" width="8.47" height="8.47" fill="#c0b090"/><rect x="868.02" y="129.32" width="8.47" height="8.47" fill="#909088"/><rect x="877.39" y="129.32" width="8.47" height="8.47" fill="#606060"/><rect x="886.76" y="129.32" width="8.47" height="8.47" fill="#303838"/><rect x="896.13" y="129.32" width="8.47" height="8.47" fill="#e8c888"/><rect x="905.50" y="129.32" width="8.47" height="8.47" fill="#d09858"/><rect x="914.87" y="129.32" width="8.47" height="8.47" fill="#b86830"/><rect x="924.24" y="129.32" width="8.47" height="8.47" fill="#a05820"/><rect x="933.61" y="129.32" width="8.47" height="8.47" fill="#804008"/></svg>
<div class="abs" style="left:988px;top:71px;width:1px;height:276px;background:#444"></div>
<div class="abs" style="left:993px;top:71px;width:1px;height:276px;background:#444"></div>
<svg class="abs" style="left:985px;top:62px" width="12" height="8" viewBox="0 0 12 8"><path d="M0.5,1.5 L4.5,1.5 L2.5,4.2Z" fill="#d8d8d8"/><path d="M5.5,1.5 H11.5 M5.5,3.7 H11.5 M5.5,5.9 H11.5" stroke="#c8c8c8" stroke-width="1"/></svg>
<svg class="abs" style="left:940px;top:347px" width="50" height="14" viewBox="940 347 50 14"><path d="M945.5,349.5 L954,349.5 L954,358.5 L948.5,358.5 L945.5,355.5Z" fill="#d8d8d8"/><path d="M945.5,355.5 L948.5,355.5 L948.5,358.5Z" fill="#666"/><rect x="946.8" y="353" width="3.4" height="3.4" fill="#555"/>
<path d="M967.5,352 L975.5,352 L974.8,359 L968.2,359Z" fill="#8c8c8c"/><rect x="967" y="350.2" width="9" height="1.3" fill="#8c8c8c"/><rect x="969.8" y="349" width="3.4" height="1.2" fill="#8c8c8c"/><path d="M970,353 V358 M973,353 V358" stroke="#666" stroke-width="0.8"/></svg>
<div class="abs" style="left:811px;top:363px;width:189px;height:13px;background:#3a3a3a"></div>
<div class="abs" style="left:811px;top:363px;width:30px;height:14px;background:#535353"></div>
<div class="abs" style="left:811px;top:376px;width:189px;height:88px;background:#535353"></div>
<div class="t" style="left:816.5px;top:364.5px;font-size:9.1px">调整</div>
<div class="t tabi" style="left:846px;top:364.5px;font-size:9.1px">样式</div>
<svg class="abs" style="left:985px;top:367px" width="12" height="8" viewBox="0 0 12 8"><path d="M0.5,1.5 L4.5,1.5 L2.5,4.2Z" fill="#d8d8d8"/><path d="M5.5,1.5 H11.5 M5.5,3.7 H11.5 M5.5,5.9 H11.5" stroke="#c8c8c8" stroke-width="1"/></svg>
<div class="t" style="left:819px;top:381px;font-size:9.6px">添加调整</div>
<svg class="abs" style="left:811px;top:395px" width="189" height="66" viewBox="811 395 189 66">
<defs><linearGradient id="ah" x1="0" x2="1"><stop offset="0" stop-color="#444"/><stop offset="1" stop-color="#e0e0e0"/></linearGradient><linearGradient id="ad" x1="0" y1="1" x2="1" y2="0"><stop offset="0" stop-color="#555"/><stop offset="1" stop-color="#d8d8d8"/></linearGradient></defs>
<g transform="translate(855.4,407) scale(0.9) translate(-855.4,-407)">
<circle cx="855.4" cy="407" r="3" fill="#c8c8c8"/><path d="M854.4,404.4 A3,3 0 0 0 854.4,409.6Z" fill="#666"/>
<path d="M859.7,407.0 L862.0,407.0" stroke="#c8c8c8" stroke-width="1.2"/>
<path d="M858.4,410.0 L860.1,411.7" stroke="#c8c8c8" stroke-width="1.2"/>
<path d="M855.4,411.3 L855.4,413.6" stroke="#c8c8c8" stroke-width="1.2"/>
<path d="M852.4,410.0 L850.7,411.7" stroke="#c8c8c8" stroke-width="1.2"/>
<path d="M851.1,407.0 L848.8,407.0" stroke="#c8c8c8" stroke-width="1.2"/>
<path d="M852.4,404.0 L850.7,402.3" stroke="#c8c8c8" stroke-width="1.2"/>
<path d="M855.4,402.7 L855.4,400.4" stroke="#c8c8c8" stroke-width="1.2"/>
<path d="M858.4,404.0 L860.1,402.3" stroke="#c8c8c8" stroke-width="1.2"/>
</g>
<g transform="translate(874.7,407) scale(0.9) translate(-874.7,-407)">
<path d="M867.7,412 L867.7,408 L869.2,405 L870.7,408 L872.2,403 L873.7,407.5 L875.2,402 L876.7,407 L878.2,404 L879.7,408 L880.7,406 L881.7,408 L881.7,412Z" fill="#c8c8c8"/>
</g>
<g transform="translate(893.7,407) scale(0.9) translate(-893.7,-407)">
<rect x="887.2" y="402.0" width="13" height="10" fill="none" stroke="#c8c8c8" stroke-width="1.1"/><path d="M887.2,407 H900.2 M891.7,402 V412 M896.0,402 V412" stroke="#9a9a9a" stroke-width="0.7"/><path d="M887.7,411.5 C893.7,411 894.7,403 899.7,402.5" fill="none" stroke="#f0f0f0" stroke-width="1.4"/>
</g>
<g transform="translate(912.6,407) scale(0.9) translate(-912.6,-407)">
<rect x="906.1" y="402.0" width="13" height="10" fill="none" stroke="#c8c8c8" stroke-width="1.1"/><path d="M906.6,411.5 L918.6,402.5 L918.6,411.5Z" fill="#bdbdbd"/><path d="M908.1,404.5 h3 m-1.5,-1.5 v3 M914.1,409.6 h3" stroke="#e8e8e8" stroke-width="0.9"/>
</g>
<g transform="translate(931.6,407) scale(0.9) translate(-931.6,-407)">
<path d="M925.1,402 L938.1,402 L931.6,413Z" fill="#8a8a8a" stroke="#c8c8c8" stroke-width="1.2"/><path d="M928.6,404 L934.6,404 L931.6,409.5Z" fill="#5c5c5c"/>
</g>
<g transform="translate(846.6,428.3) scale(0.9) translate(-846.6,-428.3)">
<rect x="840.1" y="423.3" width="13" height="4" fill="#e0e0e0"/><rect x="840.1" y="427.3" width="13" height="6" fill="url(#ah)"/><rect x="840.1" y="423.3" width="13" height="10" fill="none" stroke="#c8c8c8" stroke-width="1.1"/>
</g>
<g transform="translate(865,428.3) scale(0.9) translate(-865,-428.3)">
<path d="M865,422.3 V433.3 M860,424.3 H870 M862,433.8 H868" stroke="#c8c8c8" stroke-width="1.2"/><path d="M860,424.3 L857.5,430.3 H862.5Z M870,424.3 L867.5,430.3 H872.5Z" fill="none" stroke="#c8c8c8" stroke-width="0.9"/><path d="M857.5,430.3 A2.5,2 0 0 0 862.5,430.3Z M867.5,430.3 A2.5,2 0 0 0 872.5,430.3Z" fill="#c8c8c8"/>
</g>
<g transform="translate(884.2,428.3) scale(0.9) translate(-884.2,-428.3)">
<rect x="877.7" y="423.3" width="6.5" height="10" fill="#3f3f3f"/><rect x="884.2" y="423.3" width="6.5" height="10" fill="#d8d8d8"/><rect x="877.7" y="423.3" width="13" height="10" fill="none" stroke="#c8c8c8" stroke-width="1.1"/>
</g>
<g transform="translate(902.8,428.3) scale(0.9) translate(-902.8,-428.3)">
<path d="M896.3,424.8 h2.5 l1,-1.8 h4 l1,1.8 h2 v7.5 h-10.5Z" fill="#c8c8c8"/><circle cx="901.8" cy="428.6" r="2.2" fill="#555"/><circle cx="905.8" cy="431.3" r="3.6" fill="#6a6a6a" stroke="#c8c8c8" stroke-width="1.1"/>
</g>
<g transform="translate(921.5,428.3) scale(0.9) translate(-921.5,-428.3)">
<circle cx="921.5" cy="426.1" r="3.6" fill="#e0e0e0"/><circle cx="918.3" cy="430.7" r="3.6" fill="#c8c8c8"/><circle cx="924.7" cy="430.7" r="3.6" fill="#b4b4b4"/><circle cx="921.5" cy="429.3" r="1.6" fill="#555"/>
</g>
<g transform="translate(940.7,428.3) scale(0.9) translate(-940.7,-428.3)">
<rect x="934.2" y="423.3" width="13" height="10" fill="#8a8a8a" stroke="#c8c8c8" stroke-width="1.1"/><path d="M934.2,426.6 H947.2 M934.2,430.0 H947.2 M938.5,423.3 V433.3 M942.9000000000001,423.3 V433.3" stroke="#e6e6e6" stroke-width="1"/>
</g>
<g transform="translate(856.3,449) scale(0.9) translate(-856.3,-449)">
<rect x="849.8" y="444.0" width="13" height="10" fill="#a0a0a0" stroke="#c8c8c8" stroke-width="1.1"/><path d="M851.8,452.5 C852.3,447 857.3,445 860.8,445.5 C860.3,451 855.3,453 851.8,452.5Z" fill="#3f3f3f"/>
</g>
<g transform="translate(874.7,449) scale(0.9) translate(-874.7,-449)">
<rect x="868.2" y="444" width="13" height="10" fill="url(#ad)"/><rect x="868.2" y="444.0" width="13" height="10" fill="none" stroke="#c8c8c8" stroke-width="1.1"/><path d="M868.7,451 L876.7,444 M872.7,454 L880.7,447" stroke="#4a4a4a" stroke-width="1"/>
</g>
<g transform="translate(893.7,449) scale(0.9) translate(-893.7,-449)">
<rect x="887.2" y="444.0" width="13" height="10" fill="#d8d8d8" stroke="#c8c8c8" stroke-width="1.1"/><path d="M887.2,454 V450 L890.7,448 L892.7,450.5 L895.7,446.5 L897.7,448 L900.2,445.5 V454Z" fill="#3f3f3f"/>
</g>
<g transform="translate(912.6,449) scale(0.9) translate(-912.6,-449)">
<rect x="906.1" y="444.0" width="13" height="10" fill="#7a7a7a" stroke="#c8c8c8" stroke-width="1.1"/><path d="M906.1,444 L912.6,449 L906.1,454Z M919.1,444 L912.6,449 L919.1,454Z" fill="#c4c4c4"/>
</g>
<g transform="translate(931.6,449) scale(0.9) translate(-931.6,-449)">
<rect x="925.1" y="444" width="13" height="10" fill="url(#ah)"/><rect x="925.1" y="444.0" width="13" height="10" fill="none" stroke="#c8c8c8" stroke-width="1.1"/>
</g>
</svg>
<div class="abs" style="left:811px;top:466px;width:189px;height:13px;background:#3a3a3a"></div>
<div class="abs" style="left:811px;top:466px;width:30px;height:14px;background:#535353"></div>
<div class="abs" style="left:811px;top:479px;width:189px;height:122px;background:#535353"></div>
<div class="t" style="left:816.5px;top:467.5px;font-size:9.1px">图层</div>
<div class="t tabi" style="left:846px;top:467.5px;font-size:9.1px">通道</div>
<div class="t tabi" style="left:876px;top:467.5px;font-size:9.1px">路径</div>
<svg class="abs" style="left:985px;top:470px" width="12" height="8" viewBox="0 0 12 8"><path d="M0.5,1.5 L4.5,1.5 L2.5,4.2Z" fill="#d8d8d8"/><path d="M5.5,1.5 H11.5 M5.5,3.7 H11.5 M5.5,5.9 H11.5" stroke="#c8c8c8" stroke-width="1"/></svg>
<div class="ddl" style="left:815.5px;top:482.5px;width:54px;height:15px"></div>
<div class="t" style="left:833px;top:484.5px;font-size:9.6px">类型</div>
<svg class="abs" style="left:811px;top:480px" width="189" height="20" viewBox="811 480 189 20">
<circle cx="825.2" cy="489.2" r="2.6" fill="none" stroke="#c8c8c8" stroke-width="1.2"/><path d="M823.3,491.2 L820.8,494" stroke="#c8c8c8" stroke-width="1.4"/>
<path d="M860.5,489 L863,486.2 L865.5,489Z M860.5,491.2 L863,494 L865.5,491.2Z" fill="#e8e8e8"/>
<g transform="translate(891.5,489.6) scale(0.86) translate(-891.5,-489.6)"><rect x="886.3" y="485.3" width="10.4" height="8.6" fill="#666" stroke="#c8c8c8" stroke-width="1.1"/><path d="M887.5,492.8 L890.5,489.5 L892.5,491.3 L894,490 L895.8,492.8Z" fill="#c8c8c8"/><circle cx="893.8" cy="487.8" r="0.9" fill="#c8c8c8"/></g>
<circle cx="910.2" cy="489.5" r="4.4" fill="#c8c8c8"/><path d="M907.1,492.6 A4.4,4.4 0 0 0 913.3,486.4Z" fill="#4a4a4a"/>
<text x="928.2" y="493.8" font-family="Liberation Serif,serif" font-size="13" text-anchor="middle" fill="#c8c8c8">T</text>
<g transform="translate(947.800,489.5) scale(0.8) translate(-947.5,-489.5)"><rect x="943" y="485.5" width="9" height="8" fill="none" stroke="#c8c8c8" stroke-width="1.1"/><g fill="#c8c8c8"><rect x="941.6" y="484.1" width="2.6" height="2.6"/><rect x="950.8" y="484.1" width="2.6" height="2.6"/><rect x="941.6" y="492.3" width="2.6" height="2.6"/><rect x="950.8" y="492.3" width="2.6" height="2.6"/></g></g>
<path d="M962.5,486 L967,486 L967,484.5 L970,484.5 L971.5,486.5 L971.5,494.5 L962.5,494.5Z" fill="none" stroke="#c8c8c8" stroke-width="1.1"/><rect x="964" y="490" width="3.6" height="3.6" fill="#c8c8c8"/>
<rect x="989.5" y="483.5" width="5" height="12" rx="1" fill="#2e2e2e" stroke="#262626"/><rect x="990" y="484" width="4" height="4.5" fill="#8e8e8e"/>
</svg>
<div class="abs" style="left:811px;top:501px;width:189px;height:1px;background:#464646"></div>
<div class="abs" style="left:811px;top:523px;width:189px;height:1px;background:#464646"></div>
<div class="abs" style="left:811px;top:544px;width:189px;height:1px;background:#464646"></div>
<div class="abs" style="left:811px;top:565.5px;width:189px;height:1px;background:#464646"></div>
<div class="ddl" style="left:815.5px;top:504.5px;width:85.5px;height:15px"></div>
<div class="t" style="left:822px;top:506px;font-size:9.6px">正常</div>
<svg class="abs" style="left:890px;top:506px" width="8" height="12"><path d="M1.5,4.8 L4,2 L6.5,4.8Z M1.5,7 L4,9.8 L6.5,7Z" fill="#e8e8e8"/></svg>
<div class="t" style="left:907px;top:506px;font-size:9.6px">不透明度:</div>
<div class="inp" style="left:952.5px;top:504.5px;width:28px;height:15px"></div>
<div class="t" style="left:955px;top:506px;font-size:9.1px">100%</div>
<div class="btn" style="left:980px;top:504.5px;width:15px;height:15px"></div>
<svg class="abs" style="left:980px;top:504.5px" width="15" height="15"><path d="M5,6.5 L10,6.5 L7.500,9.5Z" fill="#f0f0f0"/></svg>
<div class="t" style="left:817px;top:528.5px;font-size:9.6px">统一:</div>
<svg class="abs" style="left:811px;top:524px" width="189" height="44" viewBox="811 524 189 44">
<path d="M846,528 L850.5,532.5 M851.5,527.5 L846.500,532.5 M848.5,530.5 L843.5,536" stroke="#c8c8c8" stroke-width="1.5" fill="none"/><g fill="none" stroke="#c8c8c8" stroke-width="0.9"><circle cx="852" cy="538" r="1.7"/><circle cx="855.2" cy="538" r="1.7"/></g>
<path d="M861,532.5 C863,529 868,529 870,532.5 C868,535.5 863,535.5 861,532.5Z" fill="none" stroke="#c8c8c8" stroke-width="1.1"/><circle cx="865.5" cy="532.3" r="1.5" fill="#c8c8c8"/><g fill="none" stroke="#c8c8c8" stroke-width="0.9"><circle cx="869" cy="538" r="1.7"/><circle cx="872.2" cy="538" r="1.7"/></g>
<text x="879" y="537" font-family="Liberation Serif,serif" font-style="italic" font-size="12" fill="#c8c8c8">fx</text><g fill="none" stroke="#c8c8c8" stroke-width="0.9"><circle cx="889" cy="538.5" r="1.7"/><circle cx="892.2" cy="538.5" r="1.7"/></g>
<rect x="944.5" y="530.5" width="8.500" height="8.500" fill="#6a6a6a" stroke="#2e2e2e"/><path d="M946,534.300 L948.300,537.2 L953,529.5" fill="none" stroke="#f0f0f0" stroke-width="1.6"/>
<g><rect x="846.0" y="552.0" width="2.25" height="2.25" fill="#e0e0e0"/><rect x="846.0" y="554.25" width="2.25" height="2.25" fill="#7a7a7a"/><rect x="846.0" y="556.5" width="2.25" height="2.25" fill="#e0e0e0"/><rect x="846.0" y="558.75" width="2.25" height="2.25" fill="#7a7a7a"/><rect x="848.25" y="552.0" width="2.25" height="2.25" fill="#7a7a7a"/><rect x="848.25" y="554.25" width="2.25" height="2.25" fill="#e0e0e0"/><rect x="848.25" y="556.5" width="2.25" height="2.25" fill="#7a7a7a"/><rect x="848.25" y="558.75" width="2.25" height="2.25" fill="#e0e0e0"/><rect x="850.5" y="552.0" width="2.25" height="2.25" fill="#e0e0e0"/><rect x="850.5" y="554.25" width="2.25" height="2.25" fill="#7a7a7a"/><rect x="850.5" y="556.5" width="2.25" height="2.25" fill="#e0e0e0"/><rect x="850.5" y="558.75" width="2.25" height="2.25" fill="#7a7a7a"/><rect x="852.75" y="552.0" width="2.25" height="2.25" fill="#7a7a7a"/><rect x="852.75" y="554.25" width="2.25" height="2.25" fill="#e0e0e0"/><rect x="852.75" y="556.5" width="2.25" height="2.25" fill="#7a7a7a"/><rect x="852.75" y="558.75" width="2.25" height="2.25" fill="#e0e0e0"/></g>
<path d="M875,549 L876.3,550.3 L869.3,558 L867.5,556.500Z" fill="#c8c8c8"/><path d="M867.500,556 L869.8,558.3 C868.8,561 865.5,561.5 863,561 C865,560 865.5,558 867.500,556Z" fill="#c8c8c8"/>
<g transform="translate(885,556) scale(0.74) translate(-885,-556)"><path d="M885,549 L887.2,551.8 L885.7,551.8 L885.7,555.3 L889.2,555.3 L889.2,553.8 L892,556 L889.2,558.2 L889.2,556.7 L885.7,556.7 L885.7,560.2 L887.2,560.2 L885,563 L882.8,560.2 L884.3,560.2 L884.3,556.7 L880.8,556.7 L880.8,558.2 L878,556 L880.8,553.8 L880.8,555.3 L884.3,555.3 L884.3,551.8 L882.8,551.8Z" fill="#c8c8c8"/></g>
<rect x="898.5" y="555" width="8" height="6.5" fill="#c8c8c8"/><path d="M900.2,555 V552.8 A2.3,2.3 0 0 1 904.8,552.8 V555" fill="none" stroke="#c8c8c8" stroke-width="1.3"/><rect x="902" y="557" width="1.2" height="2.4" fill="#555"/>
</svg>
<div class="t" style="left:959px;top:528.5px;font-size:9.6px">传播帧 1</div>
<div class="t" style="left:817px;top:550px;font-size:9.6px">锁定:</div>
<div class="t" style="left:926.5px;top:550px;font-size:9.6px">填充:</div>
<div class="inp" style="left:952.5px;top:548.5px;width:28px;height:15px"></div>
<div class="t" style="left:955px;top:550px;font-size:9.1px">100%</div>
<div class="btn" style="left:980px;top:548.5px;width:15px;height:15px"></div>
<svg class="abs" style="left:980px;top:548.5px" width="15" height="15"><path d="M5,6.5 L10,6.5 L7.500,9.5Z" fill="#f0f0f0"/></svg>
<div class="abs" style="left:811px;top:566.5px;width:177px;height:23.5px;background:#525252"></div>
<div class="abs" style="left:835.5px;top:566.5px;width:152.5px;height:23.500px;background:#4d5b73"></div>
<div class="abs" style="left:835px;top:566.5px;width:1px;height:23.500px;background:#404040"></div>
<div class="abs" style="left:811px;top:590px;width:177px;height:1px;background:#464646"></div>
<svg class="abs" style="left:817.5px;top:573.3px" width="11.5" height="9.2" viewBox="0 0 15 12"><path d="M1.5,6 C4,1.800 11,1.800 13.500,6 C11,10.200 4,10.200 1.5,6Z" fill="#8c8c8c" stroke="#c8c8c8" stroke-width="1"/><circle cx="7.5" cy="5.800" r="2.300" fill="#2a2a2a"/><circle cx="6.800" cy="5" r="0.800" fill="#ddd"/></svg>
<div class="abs" style="left:836.5px;top:568px;width:28.5px;height:20.5px;background:#2a2a2a;border:1px solid #e4e4e4"></div>
<div class="abs" style="left:839.2px;top:570.6px;width:23.200px;height:15.400px;background:radial-gradient(ellipse at 45% 50%,#ffe838 0%,#ffee50 45%,#fff47a 75%,#fff9a0 100%)"></div>
<div class="t" style="left:871px;top:572.500px;font-size:9.3px">图层 0</div>
<div class="abs" style="left:988px;top:566px;width:12px;height:35px;background:#4a4a4a;border-left:1px solid #404040"></div>
<div class="abs" style="left:810.7px;top:376px;width:1.3px;height:88px;background:#3c3c3c"></div><div class="abs" style="left:810.7px;top:479px;width:1.3px;height:122px;background:#3c3c3c"></div>
</div>
</body>
</html>
